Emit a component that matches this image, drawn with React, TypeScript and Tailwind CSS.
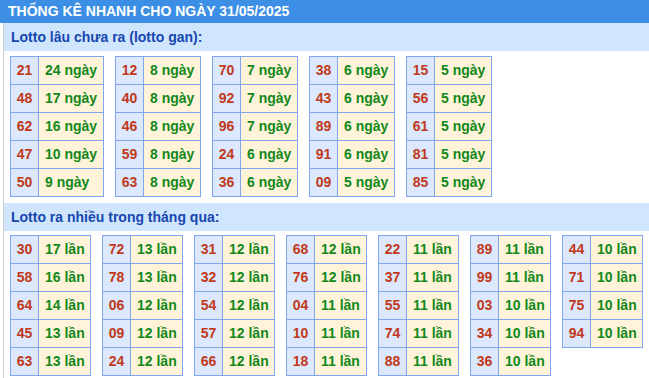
import React from "react";

const gan: [string, string][][] = [
  [["21", "24 ngày"], ["48", "17 ngày"], ["62", "16 ngày"], ["47", "10 ngày"], ["50", "9 ngày"]],
  [["12", "8 ngày"], ["40", "8 ngày"], ["46", "8 ngày"], ["59", "8 ngày"], ["63", "8 ngày"]],
  [["70", "7 ngày"], ["92", "7 ngày"], ["96", "7 ngày"], ["24", "6 ngày"], ["36", "6 ngày"]],
  [["38", "6 ngày"], ["43", "6 ngày"], ["89", "6 ngày"], ["91", "6 ngày"], ["09", "5 ngày"]],
  [["15", "5 ngày"], ["56", "5 ngày"], ["61", "5 ngày"], ["81", "5 ngày"], ["85", "5 ngày"]],
];

const nhieu: [string, string][][] = [
  [["30", "17 lần"], ["58", "16 lần"], ["64", "14 lần"], ["45", "13 lần"], ["63", "13 lần"]],
  [["72", "13 lần"], ["78", "13 lần"], ["06", "12 lần"], ["09", "12 lần"], ["24", "12 lần"]],
  [["31", "12 lần"], ["32", "12 lần"], ["54", "12 lần"], ["57", "12 lần"], ["66", "12 lần"]],
  [["68", "12 lần"], ["76", "12 lần"], ["04", "11 lần"], ["10", "11 lần"], ["18", "11 lần"]],
  [["22", "11 lần"], ["37", "11 lần"], ["55", "11 lần"], ["74", "11 lần"], ["88", "11 lần"]],
  [["89", "11 lần"], ["99", "11 lần"], ["03", "10 lần"], ["34", "10 lần"], ["36", "10 lần"]],
  [["44", "10 lần"], ["71", "10 lần"], ["75", "10 lần"], ["94", "10 lần"]],
];

function Table({ rows, valW }: { rows: [string, string][]; valW: string }) {
  return (
    <div className="border-l border-t border-[#7fa6ee] self-start">
      {rows.map(([n, v], i) => (
        <div key={i} className="flex h-[28px]">
          <div className="w-[28px] border-r border-b border-[#7fa6ee] bg-[#dbe8fd] flex items-center justify-center text-[#c0391b]">
            {n}
          </div>
          <div className={`${valW} border-r border-b border-[#7fa6ee] bg-[#fff4da] flex items-center pl-[6px] text-[#13881a]`}>
            {v}
          </div>
        </div>
      ))}
    </div>
  );
}

function Bar({ children }: { children: React.ReactNode }) {
  return (
    <div className="h-[28px] bg-[#cfe6fe] flex items-center pl-[7px] text-[14px] font-bold text-[#1747ae]">
      {children}
    </div>
  );
}

export default function App() {
  return (
    <div className="w-[649px] h-[378px] overflow-hidden bg-white" style={{ fontFamily: "Arial, 'Liberation Sans', sans-serif" }}>
      <div className="h-[23px] bg-[#3c8fe4] flex items-center pl-[8px] text-[14px] font-bold text-white">
        THỐNG KÊ NHANH CHO NGÀY 31/05/2025
      </div>
      <div className="ml-[3px] border-l border-[#cfcfcf] h-[355px]">
        <Bar>Lotto lâu chưa ra (lotto gan):</Bar>
        <div className="flex gap-[11px] pl-[6px] pt-[5px] text-[14px] font-bold">
          {gan.map((t, i) => (
            <Table key={i} rows={t} valW={i === 0 ? "w-[65px]" : "w-[57px]"} />
          ))}
        </div>
        <div className="mt-[6px]">
          <Bar>Lotto ra nhiều trong tháng qua:</Bar>
        </div>
        <div className="flex gap-[11px] pl-[6px] pt-[4px] text-[14px] font-bold">
          {nhieu.map((t, i) => (
            <Table key={i} rows={t} valW="w-[52px]" />
          ))}
        </div>
      </div>
    </div>
  );
}
